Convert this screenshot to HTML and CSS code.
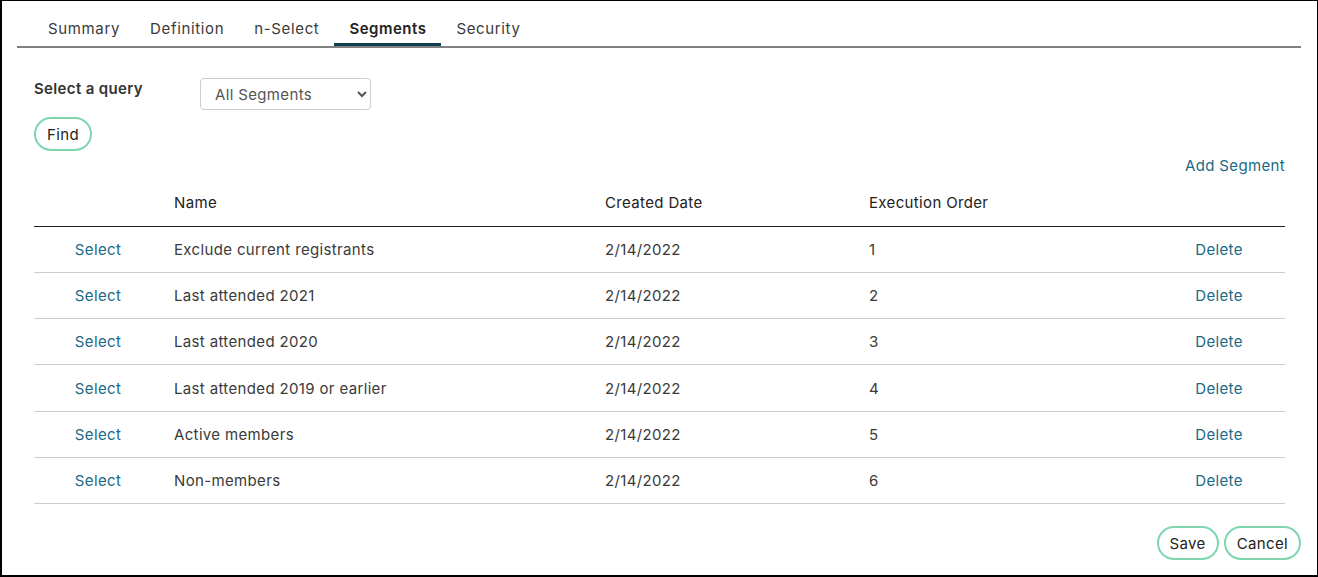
FILE: index.html
```html
<!DOCTYPE html>
<html lang="en">
<head>
    <meta charset="UTF-8">
    <title>Segments</title>
    <link rel="stylesheet" href="styles.css">
</head>
<body>
    <div class="page">
        <nav class="tabs">
            <a class="tab">Summary</a>
            <a class="tab">Definition</a>
            <a class="tab">n-Select</a>
            <a class="tab active">Segments</a>
            <a class="tab">Security</a>
        </nav>

        <div class="content">
            <div class="query-row">
                <label class="query-label" for="query">Select a query</label>
                <select id="query" class="query-select">
                    <option>All Segments</option>
                </select>
            </div>
            <button type="button" class="pill find-btn">Find</button>

            <div class="add-row">
                <a class="link">Add Segment</a>
            </div>

            <table class="segments">
                <colgroup>
                    <col class="c-select">
                    <col class="c-name">
                    <col class="c-date">
                    <col class="c-order">
                    <col class="c-delete">
                </colgroup>
                <thead>
                    <tr>
                        <th></th>
                        <th>Name</th>
                        <th>Created Date</th>
                        <th>Execution Order</th>
                        <th></th>
                    </tr>
                </thead>
                <tbody>
                    <tr>
                        <td class="center"><a class="link">Select</a></td>
                        <td>Exclude current registrants</td>
                        <td>2/14/2022</td>
                        <td>1</td>
                        <td class="center"><a class="link">Delete</a></td>
                    </tr>
                    <tr>
                        <td class="center"><a class="link">Select</a></td>
                        <td>Last attended 2021</td>
                        <td>2/14/2022</td>
                        <td>2</td>
                        <td class="center"><a class="link">Delete</a></td>
                    </tr>
                    <tr>
                        <td class="center"><a class="link">Select</a></td>
                        <td>Last attended 2020</td>
                        <td>2/14/2022</td>
                        <td>3</td>
                        <td class="center"><a class="link">Delete</a></td>
                    </tr>
                    <tr>
                        <td class="center"><a class="link">Select</a></td>
                        <td>Last attended 2019 or earlier</td>
                        <td>2/14/2022</td>
                        <td>4</td>
                        <td class="center"><a class="link">Delete</a></td>
                    </tr>
                    <tr>
                        <td class="center"><a class="link">Select</a></td>
                        <td>Active members</td>
                        <td>2/14/2022</td>
                        <td>5</td>
                        <td class="center"><a class="link">Delete</a></td>
                    </tr>
                    <tr>
                        <td class="center"><a class="link">Select</a></td>
                        <td>Non-members</td>
                        <td>2/14/2022</td>
                        <td>6</td>
                        <td class="center"><a class="link">Delete</a></td>
                    </tr>
                </tbody>
            </table>
        </div>

        <div class="actions">
            <button type="button" class="pill">Save</button>
            <button type="button" class="pill">Cancel</button>
        </div>
    </div>
</body>
</html>
```

FILE: styles.css
```css
* {
    box-sizing: border-box;
}
body {
    margin: 0;
    font-family: Inter, "Open Sans", sans-serif;
    font-size: 15px;
    letter-spacing: 0.35px;
    color: #3a3a3a;
    background: #fff;
}
.page {
    width: 1318px;
    height: 577px;
    border: 1px solid #000;
    border-left-width: 2px;
    border-bottom-width: 2px;
    overflow: hidden;
}
.tabs {
    display: flex;
    margin: 0 16px 0 15px;
    padding-left: 16px;
    border-bottom: 2px solid #808080;
}
.tab {
    padding: 18px 15px 4px;
    line-height: 20px;
    letter-spacing: 0.65px;
    color: #3a3a3a;
    border-bottom: 3px solid transparent;
}
.tab.active {
    font-weight: 600;
    letter-spacing: 0.5px;
    color: #222;
    border-bottom-color: #0e3e4f;
}
.content {
    padding: 30px 32px 0 32px;
}
.query-row {
    display: flex;
    align-items: flex-start;
}
.query-label {
    width: 166px;
    font-weight: 600;
    color: #333;
    line-height: 20px;
    padding-top: 1px;
}
.query-select {
    width: 171px;
    height: 32px;
    padding: 0 10px;
    font-family: inherit;
    font-size: 15px;
    letter-spacing: 0.35px;
    color: #555;
    background: #fff;
    border: 1px solid #ccc;
    border-radius: 4px;
}
.pill {
    height: 34px;
    padding: 0 11px;
    font-family: inherit;
    font-size: 15px;
    letter-spacing: 0.35px;
    color: #222;
    background: #fff;
    border: 2px solid #7fd6ae;
    border-radius: 17px;
    cursor: pointer;
}
.find-btn {
    margin-top: 7px;
}
.add-row {
    display: flex;
    justify-content: flex-end;
    margin-top: 5px;
    line-height: 20px;
}
.link {
    color: #1a6985;
    cursor: pointer;
}
.segments {
    width: 100%;
    border-collapse: collapse;
    table-layout: fixed;
}
.c-select { width: 128px; }
.c-name { width: 431px; }
.c-date { width: 264px; }
.c-order { width: 296px; }
.c-delete { width: 132px; }
.segments th {
    height: 50px;
    padding: 4px 12px 0;
    text-align: left;
    font-weight: 400;
    color: #222;
    border-bottom: 1px solid #222;
}
.segments td {
    height: 46.3px;
    padding: 0 12px;
    border-bottom: 1px solid #ccc;
}
.segments td.center {
    text-align: center;
}
.actions {
    display: flex;
    justify-content: flex-end;
    gap: 5px;
    padding: 22px 16px 0 0;
}
```
